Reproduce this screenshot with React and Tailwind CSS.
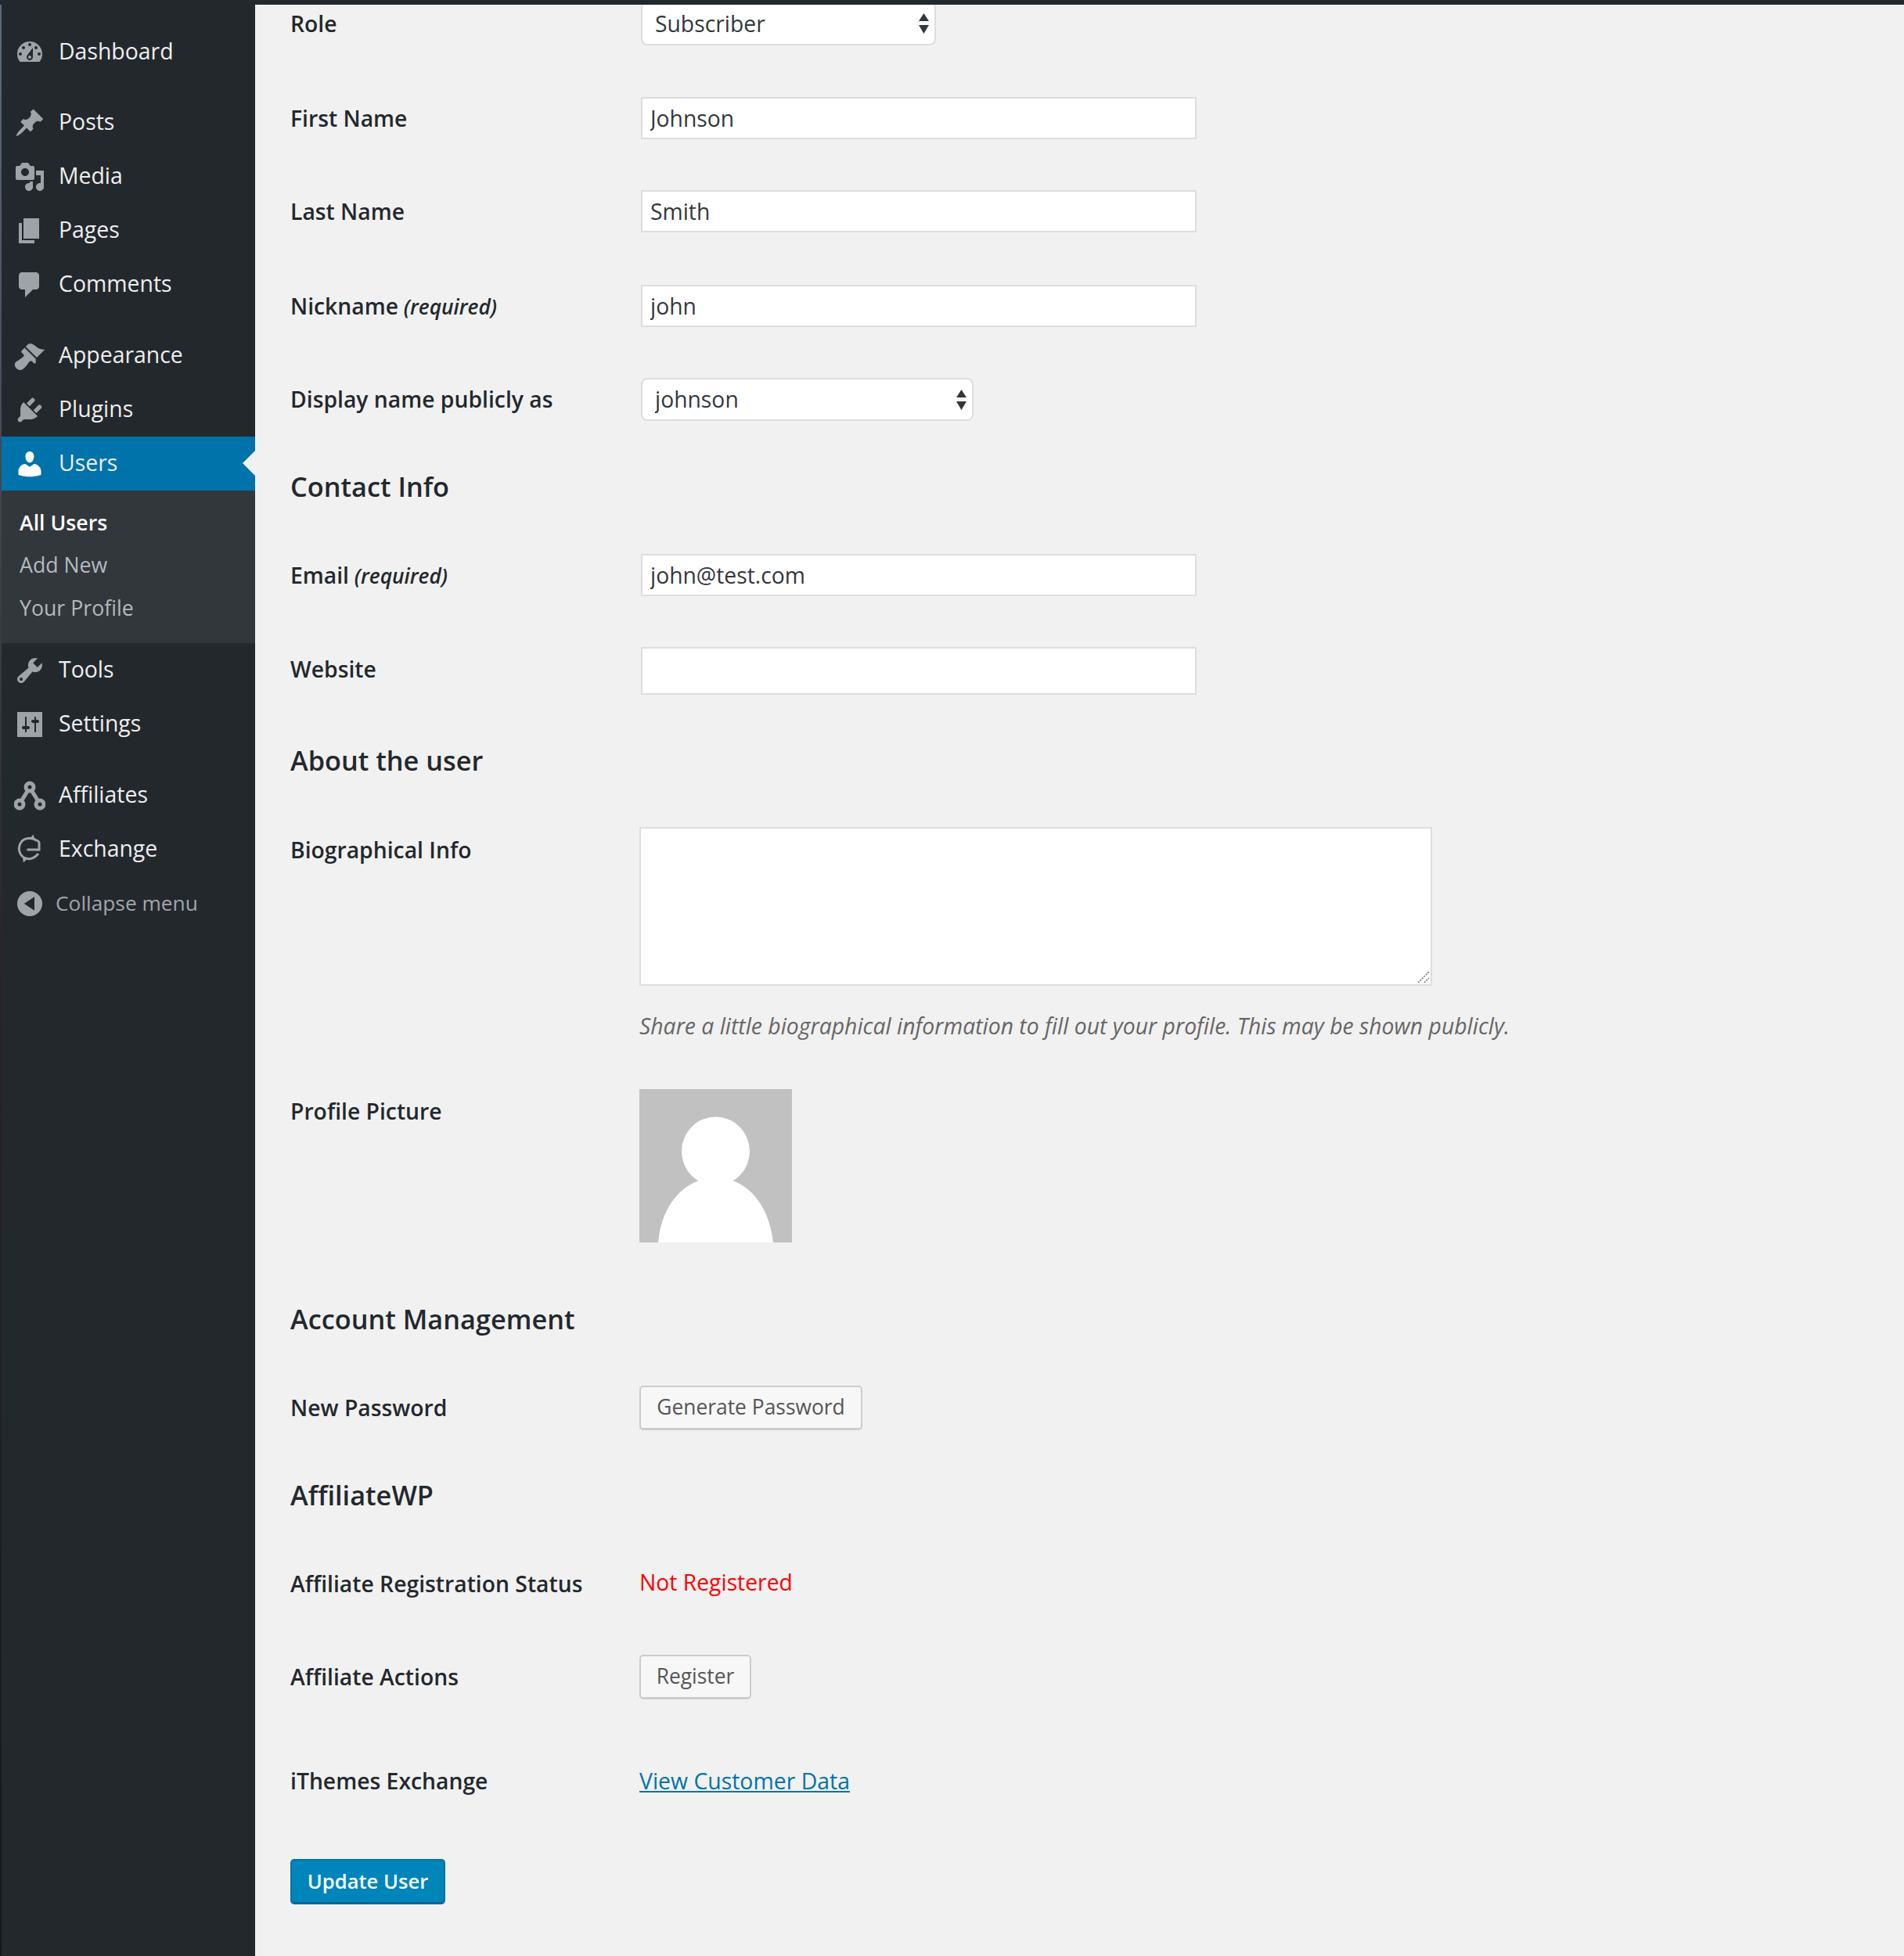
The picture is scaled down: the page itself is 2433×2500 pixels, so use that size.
import React from "react";

const P = {
  dashboard: "M3.76 16h12.48c1.1-1.37 1.76-3.11 1.76-5 0-4.42-3.58-8-8-8s-8 3.58-8 8c0 1.89.66 3.63 1.76 5zM10 4c.55 0 1 .45 1 1s-.45 1-1 1-1-.45-1-1 .45-1 1-1zM6 6c.55 0 1 .45 1 1s-.45 1-1 1-1-.45-1-1 .45-1 1-1zm8 0c.55 0 1 .45 1 1s-.45 1-1 1-1-.45-1-1 .45-1 1-1zm-5.37 5.55L12 7v6c0 1.1-.9 2-2 2s-2-.9-2-2c0-.57.24-1.08.63-1.45zM4 10c.55 0 1 .45 1 1s-.45 1-1 1-1-.45-1-1 .45-1 1-1zm12 0c.55 0 1 .45 1 1s-.45 1-1 1-1-.45-1-1 .45-1 1-1zm-5 3c0-.55-.45-1-1-1s-1 .45-1 1 .45 1 1 1 1-.45 1-1z",
  post: "M10.44 3.02l1.82-1.82 6.36 6.35-1.83 1.82c-1.05-.68-2.48-.57-3.41.36l-.75.75c-.92.93-1.04 2.35-.35 3.41l-1.83 1.82-2.41-2.41-2.8 2.79c-.42.42-3.38 2.71-3.8 2.29s1.86-3.39 2.28-3.81l2.79-2.79L4.1 9.36l1.83-1.82c1.05.69 2.48.57 3.4-.36l.75-.75c.93-.92 1.05-2.35.36-3.41z",
  media: "M13 11V4c0-.55-.45-1-1-1h-1.67L9 1H5L3.67 3H2c-.55 0-1 .45-1 1v7c0 .55.45 1 1 1h10c.55 0 1-.45 1-1zM7 4.5c1.38 0 2.5 1.12 2.5 2.5S8.38 9.5 7 9.5 4.5 8.38 4.5 7 5.62 4.5 7 4.5zM14 6h5v10.5c0 1.38-1.12 2.5-2.5 2.5S14 17.88 14 16.5s1.12-2.5 2.5-2.5c.17 0 .34.02.5.05V9h-3V6zm-4 8.05V13h2v3.5c0 1.38-1.12 2.5-2.5 2.5S7 17.88 7 16.5 8.12 14 9.5 14c.17 0 .34.02.5.05z",
  page: "M6 15V2h10v13H6zm-1 1h8v2H3V5h2v11z",
  comments: "M5 2h9c1.1 0 2 .9 2 2v7c0 1.1-.9 2-2 2h-2l-5 5v-5H5c-1.1 0-2-.9-2-2V4c0-1.1.9-2 2-2z",
  appearance: "M14.48 11.06L7.41 3.99l1.5-1.5c.5-.56 2.3-.47 3.51.32 1.21.8 1.43 1.28 2.91 2.1 1.18.64 2.45 1.26 4.45.85zm-.71.71L6.7 4.7 4.93 6.47c-.39.39-.39 1.02 0 1.41l1.06 1.06c.39.39.39 1.03 0 1.42-.6.6-1.43 1.11-2.21 1.69-.35.26-.7.53-1.01.84C1.43 13.23.4 14.2.4 15.5c0 .94.45 1.7 1.11 2.35.64.65 1.4 1.13 2.35 1.13 1.3 0 2.27-1.03 3.63-2.38.31-.31.58-.66.84-1.01.58-.78 1.09-1.61 1.69-2.21.39-.39 1.03-.39 1.42 0l1.06 1.06c.39.39 1.02.39 1.41 0z",
  plugins: "M13.11 4.36L9.87 7.6 8 5.73l3.24-3.24c.35-.34 1.05-.2 1.56.32.52.51.66 1.21.31 1.55zm-8 1.77l.91-1.12 9.01 9.01-1.19.84c-.71.71-2.63 1.16-3.82 1.16H6.14L4.9 17.26c-.59.59-1.54.59-2.12 0-.59-.58-.59-1.53 0-2.12l1.24-1.24v-3.88c0-1.13.4-3.19 1.09-3.89zm7.26 3.97l3.24-3.24c.34-.35 1.04-.21 1.55.31.52.51.66 1.21.31 1.55l-3.24 3.25z",
  users: "M10 9.25c-2.27 0-2.73-3.44-2.73-3.44C7 4.02 7.82 2 9.97 2c2.16 0 2.98 2.02 2.71 3.81 0 0-.41 3.44-2.68 3.44zm0 2.57L12.72 10c2.39 0 4.52 2.33 4.52 4.53v2.49s-3.65 1.13-7.24 1.13c-3.65 0-7.24-1.13-7.24-1.13v-2.49c0-2.25 1.94-4.53 4.47-4.53z",
  tools: "M16.68 9.77c-1.34 1.34-3.3 1.67-4.95.99l-5.41 6.52c-.99.99-2.59.99-3.58 0s-.99-2.59 0-3.57l6.52-5.42c-.68-1.65-.35-3.61.99-4.95 1.28-1.28 3.12-1.62 4.72-1.06l-2.89 2.89 2.82 2.82 2.86-2.87c.53 1.58.18 3.39-1.08 4.65zM3.81 16.21c.4.39 1.04.39 1.43 0 .4-.4.4-1.04 0-1.43-.39-.4-1.03-.4-1.43 0-.39.39-.39 1.03 0 1.43z",
  settings: "M2 2h16v16H2zM8 11h1c.55 0 1 .45 1 1s-.45 1-1 1H8v1.5c0 .28-.22.5-.5.5s-.5-.22-.5-.5V13H6c-.55 0-1-.45-1-1s.45-1 1-1h1V5.5c0-.28.22-.5.5-.5s.5.22.5.5V11zm5-2h-1c-.55 0-1-.45-1-1s.45-1 1-1h1V5.5c0-.28.22-.5.5-.5s.5.22.5.5V7h1c.55 0 1 .45 1 1s-.45 1-1 1h-1v5.5c0 .28-.22.5-.5.5s-.5-.22-.5-.5V9z",
  collapse: "M10 2a8 8 0 1 0 0 16a8 8 0 1 0 0-16zM13 5.6v8.8L6.4 10z",
};

function Icon({ name, color = "#9ea3a8" }) {
  if (name === "affiliates") {
    return (
      <svg viewBox="0 0 40 38" className="w-[40px] h-[38px]" fill="none" stroke={color} strokeWidth="5">
        <circle cx="20" cy="8" r="5" />
        <circle cx="7" cy="30" r="5" />
        <circle cx="33" cy="30" r="5" />
        <path d="M17.500 12.500L9.500 25.500M22.500 12.500L30.500 25.500" />
      </svg>
    );
  }
  if (name === "exchange") {
    return (
      <svg viewBox="0 0 32 38" className="w-[32px] h-[38px] ml-[2px] mb-[4px]" fill="none" stroke={color} strokeWidth="3">
        <path d="M27 9.500C22 5 10 5 6 13C2 21 6 30 13 32C19 34 25 31 29 26" />
        <path d="M14.500 21H30V12C30 11 29 10 27 9" />
        <path d="M22.500 1.500L24.500 8L18 7Z" fill={color} stroke="none" />
        <path d="M10 37.500L8.500 29L15 32.500Z" fill={color} stroke="none" />
      </svg>
    );
  }
  return (
    <svg viewBox="0 0 20 20" className="w-[40px] h-[40px]" fill={color} fillRule="evenodd">
      <path d={P[name]} />
    </svg>
  );
}

function MenuItem({ icon, label, active, mt = "" }) {
  return (
    <div className={`relative flex items-center h-[69px] ${mt} ${active ? "bg-[#0073aa]" : ""}`}>
      <div className="w-[73px] pl-[16px] flex items-center justify-start shrink-0">
        <Icon name={icon} color={active ? "#ffffff" : "#9ea3a8"} />
      </div>
      <span className="text-[#eeeeee] text-[28.400px] leading-none pb-[3px]">{label}</span>
      {active && (
        <span className="absolute right-0 top-[18px] w-0 h-0 border-y-[16px] border-y-transparent border-r-[16px] border-r-[#f1f1f1]" />
      )}
    </div>
  );
}

function Sidebar() {
  return (
    <aside className="w-[326px] shrink-0 bg-[#23282d] flex">
      <div className="w-[2px] shrink-0 bg-gradient-to-b from-[#5a6b80] via-[#2b2228] to-[#14181d]" />
      <nav className="flex-1 pt-[26px] min-w-0">
        <MenuItem icon="dashboard" label="Dashboard" />
        <MenuItem icon="post" label="Posts" mt="mt-[21px]" />
        <MenuItem icon="media" label="Media" />
        <MenuItem icon="page" label="Pages" />
        <MenuItem icon="comments" label="Comments" />
        <MenuItem icon="appearance" label="Appearance" mt="mt-[22px]" />
        <MenuItem icon="plugins" label="Plugins" />
        <MenuItem icon="users" label="Users" active />
        <div className="bg-[#32373c] h-[195px] pt-[14px] pl-[23px] text-[26.700px] flex flex-col">
          <div className="h-[54px] flex items-center font-semibold text-white">All Users</div>
          <div className="h-[55px] flex items-center text-[#b4b9be]">Add New</div>
          <div className="h-[55px] flex items-center text-[#b4b9be]">Your Profile</div>
        </div>
        <MenuItem icon="tools" label="Tools" />
        <MenuItem icon="settings" label="Settings" />
        <MenuItem icon="affiliates" label="Affiliates" mt="mt-[22px]" />
        <MenuItem icon="exchange" label="Exchange" />
        <div className="flex items-center h-[69px]">
          <div className="w-[69px] pl-[16px] flex items-center shrink-0">
            <Icon name="collapse" />
          </div>
          <span className="text-[#a0a5aa] text-[26.300px] leading-none">Collapse menu</span>
        </div>
      </nav>
    </aside>
  );
}

const labelCls = "w-[446px] shrink-0 text-[28.300px] font-semibold text-[#23282d] leading-none";
const inputCls = "block w-[710px] ml-[2px] h-[54px] bg-white border-2 border-[#dddddd] px-[10px] text-[28.300px] text-[#32373c] outline-none";

function Label({ children, note, pt = "", shift = "" }) {
  return (
    <div className={`${labelCls} ${pt} ${shift}`}>
      {children}
      {note && <em className="text-[26.300px] font-semibold italic"> {note}</em>}
    </div>
  );
}

function Row({ mt, h, label, note, children, top, pt, shift }) {
  return (
    <div className={`flex ${top ? "items-start" : "items-center"} ${mt} ${h}`}>
      <Label note={note} pt={pt} shift={shift}>{label}</Label>
      {children}
    </div>
  );
}

function Heading({ mt, children }) {
  return (
    <h2 className={`${mt} h-[40px] flex items-center text-[34.300px] font-semibold text-[#23282d] leading-none`}>{children}</h2>
  );
}

function SelectBox({ w, value, h = "h-[55px]" }) {
  return (
    <div className={`relative ml-[2px] ${w} ${h}`}>
      <select
        defaultValue={value}
        className="appearance-none w-full h-full bg-white border-2 border-[#dddddd] rounded-[8px] pl-[16px] text-[28.300px] text-[#32373c] outline-none"
      >
        <option>{value}</option>
      </select>
      <svg viewBox="0 0 13 26" className="absolute right-[9px] top-1/2 -translate-y-1/2 w-[13px] h-[26px] fill-[#32373c]">
        <path d="M6.500 0L13 10H0zM6.500 26L0 15H13z" />
      </svg>
    </div>
  );
}

function Btn({ children, w }) {
  return (
    <button className={`h-[57px] ${w} bg-[#f7f7f7] border-2 border-[#cccccc] border-b-[3px] rounded-[5px] text-[26.400px] text-[#555555] leading-none`}>
      {children}
    </button>
  );
}

function Avatar() {
  return (
    <svg viewBox="0 0 195 196" className="w-[195px] h-[196px] block">
      <rect width="195" height="196" fill="#c1c1c1" />
      <ellipse cx="97.500" cy="79.500" rx="43.500" ry="44" fill="#ffffff" />
      <path d="M24 196C27 160 45 128 76 117L119 117C150 128 167 160 171 196Z" fill="#ffffff" />
    </svg>
  );
}

function Main() {
  return (
    <main className="flex-1 bg-[#f1f1f1] pl-[45px]">
      <Row h="h-[48px]" mt="" label="Role">
        <SelectBox w="w-[377px]" value="Subscriber" h="h-[56px]" />
      </Row>
      <Row h="h-[54px]" mt="mt-[70px]" label="First Name">
        <input className={inputCls} defaultValue="Johnson" />
      </Row>
      <Row h="h-[54px]" mt="mt-[65px]" label="Last Name">
        <input className={inputCls} defaultValue="Smith" />
      </Row>
      <Row h="h-[54px]" mt="mt-[67px]" label="Nickname" note="(required)">
        <input className={inputCls} defaultValue="john" />
      </Row>
      <Row h="h-[55px]" mt="mt-[65px]" label="Display name publicly as">
        <SelectBox w="w-[425px]" value="johnson" />
      </Row>
      <Heading mt="mt-[64px]">Contact Info</Heading>
      <Row h="h-[54px]" mt="mt-[66px]" label="Email" note="(required)">
        <input className={inputCls} defaultValue="john@test.com" />
      </Row>
      <Row h="h-[61px]" mt="mt-[65px]" label="Website" shift="pb-[5px]">
        <input className={`${inputCls} !h-[61px]`} defaultValue="" />
      </Row>
      <Heading mt="mt-[64px]">About the user</Heading>
      <Row h="h-[203px]" mt="mt-[65px]" label="Biographical Info" top pt="pt-[15px]">
        <div className="relative w-[1013px] h-[203px]">
          <textarea className="block w-full h-full bg-white border-2 border-[#dddddd] outline-none resize-none" />
          <svg viewBox="0 0 14 14" className="absolute right-[4px] bottom-[4px] w-[14px] h-[14px]" fill="none" stroke="#666666" strokeWidth="1.500" strokeDasharray="2 1.500">
            <path d="M0 14L14 0M8 14L14 8" />
          </svg>
        </div>
      </Row>
      <p className="mt-[36px] ml-[446px] h-[30px] leading-[30px] text-[28.350px] italic text-[#666666] whitespace-nowrap">
        Share a little biographical information to fill out your profile. This may be shown publicly.
      </p>
      <Row h="h-[196px]" mt="mt-[66px]" label="Profile Picture" top pt="pt-[14px]">
        <Avatar />
      </Row>
      <Heading mt="mt-[78px]">Account Management</Heading>
      <Row h="h-[56px]" mt="mt-[65px]" label="New Password">
        <Btn w="w-[285px]">Generate Password</Btn>
      </Row>
      <Heading mt="mt-[64px]">AffiliateWP</Heading>
      <Row h="h-[40px]" mt="mt-[73px]" label="Affiliate Registration Status">
        <span className="text-[28.300px] text-[#ff0000] leading-none pb-[3px]">Not Registered</span>
      </Row>
      <Row h="h-[56px]" mt="mt-[71px]" label="Affiliate Actions">
        <Btn w="w-[143px]">Register</Btn>
      </Row>
      <Row h="h-[40px]" mt="mt-[85px]" label="iThemes Exchange">
        <a href="#" className="text-[28.400px] text-[#0073aa] underline leading-none">View Customer Data</a>
      </Row>
      <button className="mt-[80px] h-[58px] w-[198px] bg-[#0085ba] border-2 border-[#0073aa] border-b-[3px] border-b-[#006799] rounded-[5px] text-[25.600px] text-white font-semibold leading-none block">
        Update User
      </button>
    </main>
  );
}

export default function App() {
  return (
    <div className="font-['Open_Sans',sans-serif] w-[2433px] h-[2500px] flex flex-col overflow-hidden bg-[#f1f1f1]">
      <div className="h-[6px] shrink-0 bg-[#23282d] relative z-10" />
      <div className="flex flex-1 min-h-0">
        <Sidebar />
        <Main />
      </div>
    </div>
  );
}
